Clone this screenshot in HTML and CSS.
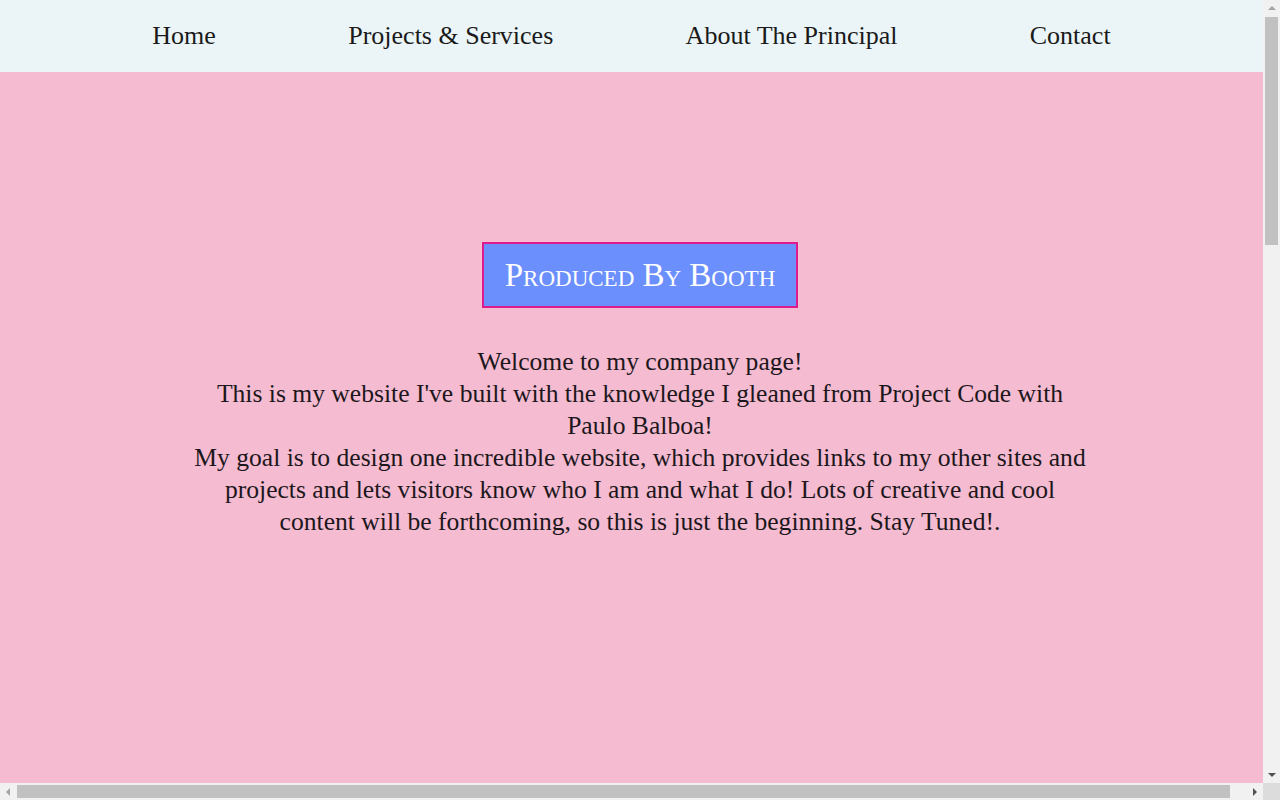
FILE: index.html
```html
<!DOCTYPE html>
<html lang="en">
<head>
<meta charset="utf-8">
<title>Produced By Booth</title>
<link rel="stylesheet" href="styles.css">
</head>
<body>
<div class="window">
  <div class="viewport">
    <nav class="nav">
      <a class="nav-link" href="#">Home</a>
      <a class="nav-link" href="#">Projects &amp; Services</a>
      <a class="nav-link" href="#">About The Principal</a>
      <a class="nav-link" href="#">Contact</a>
    </nav>
    <main class="hero">
      <h1 class="brand">Produced By Booth</h1>
      <p class="intro">Welcome to my company page!<br>This is my website I've built with the knowledge I gleaned from Project Code with Paulo Balboa!<br>My goal is to design one incredible website, which provides links to my other sites and projects and lets visitors know who I am and what I do! Lots of creative and cool content will be forthcoming, so this is just the beginning. Stay Tuned!.</p>
    </main>
  </div>
  <div class="vbar" aria-hidden="true">
    <span class="sb-btn"><i class="arrow arrow-up"></i></span>
    <span class="vtrack"><span class="vthumb"></span></span>
    <span class="sb-btn"><i class="arrow arrow-down"></i></span>
  </div>
  <div class="hbar" aria-hidden="true">
    <span class="sb-btn"><i class="arrow arrow-left"></i></span>
    <span class="htrack"><span class="hthumb"></span></span>
    <span class="sb-btn"><i class="arrow arrow-right"></i></span>
  </div>
  <div class="corner" aria-hidden="true"></div>
</div>
</body>
</html>
```

FILE: styles.css
```css
html, body {
  margin: 0;
  padding: 0;
  height: 100%;
  overflow: hidden;
}
body {
  font-family: "Liberation Serif", "Times New Roman", serif;
  color: #1c171c;
  background: #f5bbd0;
}
.window {
  display: grid;
  grid-template-columns: 1fr 17px;
  grid-template-rows: 1fr 17px;
  width: 100vw;
  height: 100vh;
}
.viewport {
  overflow: hidden;
  min-width: 0;
  min-height: 0;
  background: #f5bbd0;
}

/* scrollbars */
.vbar, .hbar {
  display: flex;
  background: #f1f1f1;
}
.vbar { flex-direction: column; }
.sb-btn {
  flex: 0 0 17px;
  width: 17px;
  height: 17px;
  display: flex;
  align-items: center;
  justify-content: center;
}
.vtrack {
  flex: 1;
  display: flex;
  flex-direction: column;
  align-items: center;
}
.vthumb {
  width: 13px;
  height: 228px;
  background: #c1c1c1;
}
.htrack {
  flex: 1;
  display: flex;
  align-items: center;
}
.hthumb {
  width: 1213px;
  height: 13px;
  background: #c1c1c1;
}
.corner { background: #dcdcdc; }
.arrow {
  display: block;
  width: 0;
  height: 0;
}
.arrow-up {
  border-left: 4px solid transparent;
  border-right: 4px solid transparent;
  border-bottom: 4px solid #a3a3a3;
  margin-top: -1px;
}
.arrow-down {
  border-left: 4px solid transparent;
  border-right: 4px solid transparent;
  border-top: 4px solid #505050;
  margin-top: 1px;
}
.arrow-left {
  border-top: 4px solid transparent;
  border-bottom: 4px solid transparent;
  border-right: 4px solid #a3a3a3;
  margin-left: -1px;
}
.arrow-right {
  border-top: 4px solid transparent;
  border-bottom: 4px solid transparent;
  border-left: 4px solid #505050;
  margin-left: 1px;
}

/* page */
.nav {
  display: flex;
  justify-content: space-evenly;
  align-items: center;
  height: 72px;
  padding: 0 20px;
  background: #ebf5f7;
}
.nav-link {
  font-size: 26px;
  color: #1a1a1a;
  text-decoration: none;
}
.hero {
  width: 1280px;
  min-height: 2503px;
  box-sizing: border-box;
  padding-top: 170px;
  display: flex;
  flex-direction: column;
  align-items: center;
  background: #f5bbd0;
}
.brand {
  margin: 0;
  padding: 12px 21px;
  font-size: 33px;
  font-weight: normal;
  font-variant: small-caps;
  line-height: 38px;
  color: #ffffff;
  background: #6b8ffc;
  border: 2px solid #de1a8c;
}
.intro {
  margin: 38px 0 0;
  width: 904px;
  font-size: 25.6px;
  line-height: 32px;
  text-align: center;
}
```
